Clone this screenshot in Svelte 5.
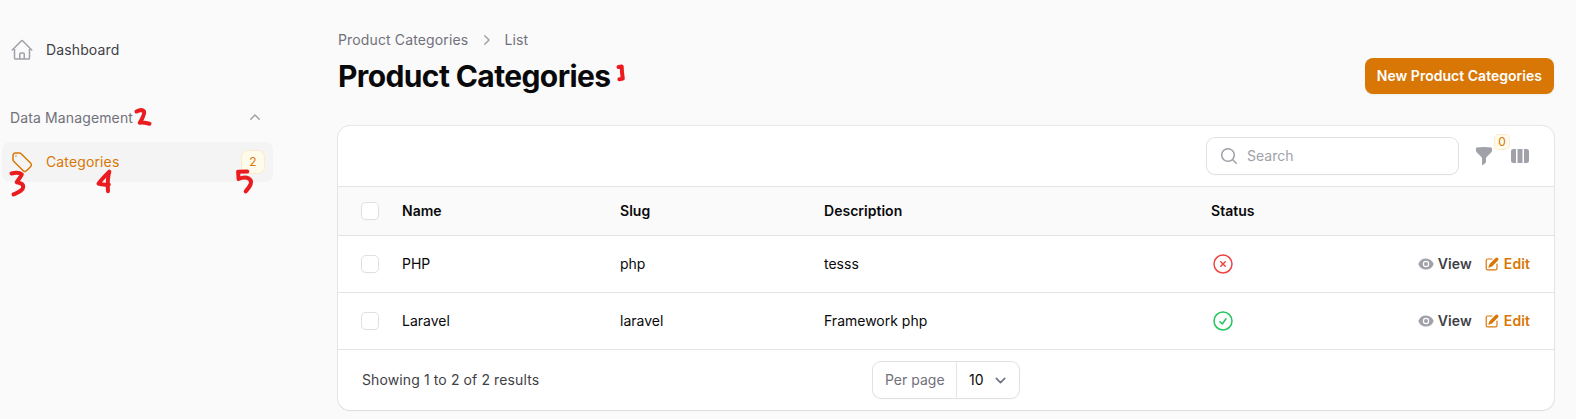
<script>
  const rows = [
    { name: 'PHP', slug: 'php', description: 'tesss', active: false },
    { name: 'Laravel', slug: 'laravel', description: 'Framework php', active: true }
  ];
</script>

<div class="page">
  <aside>
    <a class="item">
      <svg class="i24 gray" viewBox="0 0 24 24"><path d="m2.25 12 8.954-8.955c.44-.439 1.152-.439 1.591 0L21.75 12M4.5 9.75v10.125c0 .621.504 1.125 1.125 1.125H9.75v-4.875c0-.621.504-1.125 1.125-1.125h2.25c.621 0 1.125.504 1.125 1.125V21h4.125c.621 0 1.125-.504 1.125-1.125V9.75M8.25 21h8.25" /></svg>
      <span>Dashboard</span>
    </a>
    <div class="group">
      <span>Data Management</span>
      <svg class="i20 gray" viewBox="0 0 20 20"><path d="M9.47 6.47a.75.75 0 0 1 1.06 0l4.25 4.25a.75.75 0 1 1-1.06 1.06L10 8.06l-3.72 3.72a.75.75 0 0 1-1.06-1.06l4.25-4.25Z" /></svg>
    </div>
    <a class="item active">
      <svg class="i24" viewBox="0 0 24 24"><path d="M9.568 3H5.25A2.25 2.25 0 0 0 3 5.25v4.318c0 .597.237 1.17.659 1.591l9.581 9.581c.699.699 1.78.872 2.607.33a18.095 18.095 0 0 0 5.223-5.223c.542-.827.369-1.908-.33-2.607L11.16 3.66A2.25 2.25 0 0 0 9.568 3Z" /><path d="M6 6h.008v.008H6V6Z" /></svg>
      <span>Categories</span>
      <span class="badge">2</span>
    </a>
  </aside>

  <main>
    <header>
      <div>
        <nav>
          <span>Product Categories</span>
          <svg class="i20 gray" viewBox="0 0 20 20"><path d="M8.22 5.22a.75.75 0 0 1 1.06 0l4.25 4.25a.75.75 0 0 1 0 1.06l-4.25 4.25a.75.75 0 0 1-1.06-1.06L11.94 10 8.22 6.28a.75.75 0 0 1 0-1.06Z" /></svg>
          <span>List</span>
        </nav>
        <h1>Product Categories</h1>
      </div>
      <button class="primary">New Product Categories</button>
    </header>

    <section class="card">
      <div class="toolbar">
        <div class="search">
          <svg class="i20 gray" viewBox="0 0 20 20"><path fill-rule="evenodd" d="M9 3.5a5.5 5.5 0 1 0 0 11 5.5 5.5 0 0 0 0-11ZM2 9a7 7 0 1 1 12.452 4.391l3.328 3.329a.75.75 0 1 1-1.06 1.06l-3.329-3.328A7 7 0 0 1 2 9Z" /></svg>
          <span>Search</span>
        </div>
        <div class="filter">
          <svg class="i20 gray" viewBox="0 0 20 20"><path d="M2.628 1.601C5.028 1.206 7.49 1 10 1s4.973.206 7.372.601a.75.75 0 0 1 .628.74v2.288a2.25 2.25 0 0 1-.659 1.59l-4.682 4.683a2.25 2.25 0 0 0-.659 1.59v3.037c0 .684-.31 1.33-.844 1.757l-1.937 1.55A.75.75 0 0 1 8 18.25v-5.757a2.25 2.25 0 0 0-.659-1.591L2.659 6.22A2.25 2.25 0 0 1 2 4.629V2.34a.75.75 0 0 1 .628-.74Z" /></svg>
          <span class="count">0</span>
        </div>
        <svg class="i20 gray" viewBox="0 0 20 20"><path d="M14 17h2.75A2.25 2.25 0 0 0 19 14.75v-9.5A2.25 2.25 0 0 0 16.75 3H14v14ZM12.5 3h-5v14h5V3ZM3.25 3H6v14H3.25A2.25 2.25 0 0 1 1 14.75v-9.5A2.25 2.25 0 0 1 3.25 3Z" /></svg>
      </div>

      <div class="row head">
        <i class="check"></i>
        <span>Name</span><span>Slug</span><span>Description</span><span>Status</span>
      </div>
      {#each rows as row}
        <div class="row">
          <i class="check"></i>
          <span>{row.name}</span><span>{row.slug}</span><span>{row.description}</span>
          {#if row.active}
            <svg class="i24 green" viewBox="0 0 24 24"><path d="M9 12.75 11.25 15 15 9.75M21 12a9 9 0 1 1-18 0 9 9 0 0 1 18 0Z" /></svg>
          {:else}
            <svg class="i24 red" viewBox="0 0 24 24"><path d="m9.75 9.75 4.5 4.5m0-4.5-4.5 4.5M21 12a9 9 0 1 1-18 0 9 9 0 0 1 18 0Z" /></svg>
          {/if}
          <div class="actions">
            <a class="link">
              <svg class="i16 gray" viewBox="0 0 20 20"><path d="M10 12.5a2.5 2.5 0 1 0 0-5 2.5 2.5 0 0 0 0 5Z" /><path fill-rule="evenodd" d="M.664 10.59a1.651 1.651 0 0 1 0-1.186A10.004 10.004 0 0 1 10 3c4.257 0 7.893 2.66 9.336 6.41.147.381.146.804 0 1.186A10.004 10.004 0 0 1 10 17c-4.257 0-7.893-2.66-9.336-6.41ZM14 10a4 4 0 1 1-8 0 4 4 0 0 1 8 0Z" /></svg>
              View
            </a>
            <a class="link amber">
              <svg class="i16" viewBox="0 0 20 20"><path d="m5.433 13.917 1.262-3.155A4 4 0 0 1 7.58 9.42l6.92-6.918a2.121 2.121 0 0 1 3 3l-6.92 6.918c-.383.383-.84.685-1.343.886l-3.154 1.262a.5.5 0 0 1-.65-.65Z" /><path d="M3.5 5.75c0-.69.56-1.25 1.25-1.25H10A.75.75 0 0 0 10 3H4.75A2.75 2.75 0 0 0 2 5.75v9.5A2.75 2.75 0 0 0 4.75 18h9.5A2.75 2.75 0 0 0 17 15.25V10a.75.75 0 0 0-1.5 0v5.25c0 .69-.56 1.25-1.25 1.25h-9.5c-.69 0-1.25-.56-1.25-1.25v-9.5Z" /></svg>
              Edit
            </a>
          </div>
        </div>
      {/each}

      <footer>
        <span class="summary">Showing 1 to 2 of 2 results</span>
        <div class="perpage">
          <span class="label">Per page</span>
          <span class="value">10
            <svg viewBox="0 0 20 20"><path d="m6 8 4 4 4-4" /></svg>
          </span>
        </div>
      </footer>
    </section>
  </main>

  <!-- handwritten marker numbers over the page -->
  <svg class="marks" viewBox="0 0 1576 419">
    <path d="M618.500 67l3.200-.4.300 6 .8 6-3.400.7" />
    <path d="M136.500 111.500c3-1.500 6-1.800 7.500-.2 1 3-2 7.500-4.300 11.500 3.500-.7 7 .3 9.800.9" />
    <path d="M11.500 173.500c3.500-1 8-1 10.300.8-1.300 3.500-3.500 5-5.100 8 3.500.5 6.800 1.500 6.500 4.700-.3 4-5.500 5.500-9.700 7.400" />
    <path d="M109.300 171.700c-4 4-8 8-10.800 12 3.500 1.300 7 1 10.300.8M109.300 171.700c-1.800 6-1.800 13-1.300 19.500" />
    <path d="M247.300 171.600l-9.200.2.500 7.200c3-1.200 7-2 10-.6 5 2.600 1.500 8-2.900 13" />
  </svg>
</div>

<style>
  :global(body) { background: #fafafa; }
  * { box-sizing: border-box; }
  .page {
    position: relative; display: flex; width: 1576px; height: 419px; overflow: hidden;
    background: #fafafa; color: #09090b; font: 400 14px/20px Inter, sans-serif;
  }
  svg { flex: none; display: block; fill: currentColor; }
  .i24 { width: 24px; height: 24px; fill: none; stroke: currentColor; stroke-width: 1.5; stroke-linecap: round; stroke-linejoin: round; }
  .i20 { width: 20px; height: 20px; }
  .i16 { width: 16px; height: 16px; }
  .gray { color: #a1a1aa; }
  .red { color: #ef4444; }
  .green { color: #22c55e; }

  aside { width: 273px; padding: 30px 0 0 2px; }
  .item { display: flex; align-items: center; gap: 12px; height: 40px; padding: 0 8px; border-radius: 8px; letter-spacing: .13px; color: #3f3f46; }
  .active { background: #f4f4f5; color: #d97706; }
  .group { display: flex; justify-content: space-between; align-items: center; height: 40px; margin: 28px 0 4px; padding: 0 8px; letter-spacing: .13px; color: #71717a; }
  .badge { width: 22px; height: 22px; margin: 0 1px 0 auto; border-radius: 6px; background: #fffbeb; box-shadow: 0 0 0 1px #fbebcf; font-size: 12px; line-height: 22px; text-align: center; }

  main { width: 1216px; margin-left: 65px; padding-top: 30px; }
  header { display: flex; justify-content: space-between; align-items: center; height: 64px; }
  header > div { align-self: flex-start; }
  nav { display: flex; gap: 8px; letter-spacing: .14px; color: #71717a; }
  h1 { margin: 8px 0 0; font-size: 30px; line-height: 36px; font-weight: 700; letter-spacing: -0.61px; white-space: nowrap; }
  .primary { align-self: flex-end; height: 36px; padding: 0 12px; border: 0; border-radius: 8px; background: #d97706; color: #fff; font: 600 14px/20px Inter, sans-serif; letter-spacing: .02px; white-space: nowrap; box-shadow: 0 1px 2px rgba(0, 0, 0, .05); }

  .card { margin-top: 32px; height: 284px; border-radius: 12px; background: #fff; box-shadow: 0 0 0 1px rgba(9, 9, 11, .08), 0 1px 2px rgba(0, 0, 0, .05); overflow: hidden; }
  .toolbar { display: flex; align-items: center; height: 60px; padding: 0 24px; justify-content: flex-end; gap: 16px; }
  .search { display: flex; align-items: center; gap: 8px; width: 251px; height: 36px; padding: 0 12px; border-radius: 8px; box-shadow: 0 0 0 1px #e1e1e2, 0 1px 2px rgba(0, 0, 0, .05); color: #a1a1aa; }
  .filter { position: relative; }
  .count { position: absolute; left: 21px; top: -11px; width: 14px; height: 14px; border-radius: 4px; background: #fffbeb; box-shadow: 0 0 0 1px #fbebcf; color: #d97706; font-size: 12px; line-height: 14px; text-align: center; }
  .row { display: grid; grid-template-columns: 40px 218px 204px 387px 120px 1fr; align-items: center; height: 57px; padding: 0 24px; border-top: 1px solid #e4e4e5; }
  .head { height: 49px; background: #fafafa; font-weight: 600; letter-spacing: .02px; }
  .check { width: 16px; height: 16px; border-radius: 4px; background: #fff; box-shadow: 0 0 0 1px #e0e0e1, 0 1px 2px rgba(0, 0, 0, .05); }
  .actions { display: flex; justify-content: flex-end; gap: 12px; }
  .link { display: flex; align-items: center; gap: 4px; font-weight: 600; letter-spacing: .08px; color: #3f3f46; }
  .amber { color: #d97706; }
  footer { display: grid; grid-template-columns: 1fr auto 1fr; align-items: center; height: 61px; padding: 0 24px; border-top: 1px solid #e4e4e5; color: #3f3f46; }
  .summary { letter-spacing: .11px; }
  .perpage { display: flex; width: 146px; height: 36px; border-radius: 8px; box-shadow: 0 0 0 1px #e1e1e2, 0 1px 2px rgba(0, 0, 0, .05); line-height: 36px; }
  .label { width: 84px; padding-left: 12px; border-right: 1px solid #e4e4e5; color: #71717a; }
  .value { display: flex; align-items: center; gap: 6px; padding-left: 12px; color: #09090b; }
  .value svg { width: 21px; height: 21px; fill: none; stroke: #6b7280; stroke-width: 1.5; stroke-linecap: round; stroke-linejoin: round; }
  .marks { position: absolute; inset: 0; width: 1576px; height: 419px; fill: none; stroke: #ea1c20; stroke-width: 4; stroke-linecap: round; stroke-linejoin: round; pointer-events: none; }
</style>
